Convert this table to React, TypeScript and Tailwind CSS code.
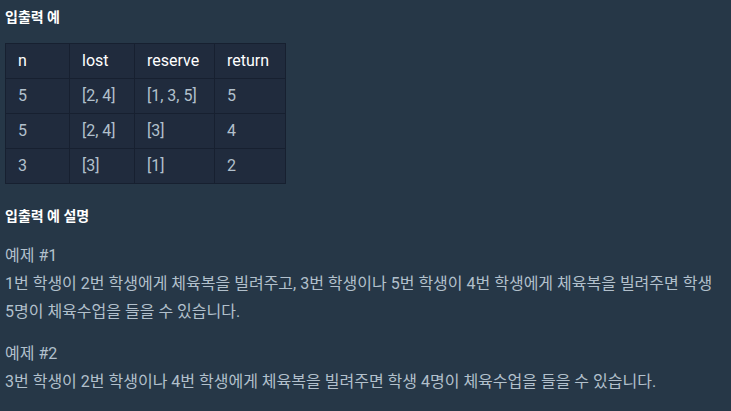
const rows = [
  ["5", "[2, 4]", "[1, 3, 5]", "5"],
  ["5", "[2, 4]", "[3]", "4"],
  ["3", "[3]", "[1]", "2"],
];

const headers = ["n", "lost", "reserve", "return"];
const widths = ["w-[64px]", "w-[65px]", "w-[80px]", "w-[71px]"];

export default function App() {
  return (
    <div
      className="min-h-screen w-full bg-[#263747] text-[#b2c0cc] px-[5px] pt-[5px] break-keep"
      style={{ fontFamily: 'Roboto, "Noto Sans CJK KR", sans-serif' }}
    >
      <h5 className="text-[14px] font-bold text-white leading-[24px]">입출력 예</h5>

      <table className="mt-[14px] border-collapse bg-[#202b3d] text-[16px]">
        <thead>
          <tr>
            {headers.map((h, i) => (
              <th
                key={h}
                className={`${widths[i]} h-[35px] border border-[#172030] px-[12px] text-left font-normal text-white`}
              >
                {h}
              </th>
            ))}
          </tr>
        </thead>
        <tbody>
          {rows.map((r, ri) => (
            <tr key={ri}>
              {r.map((c, ci) => (
                <td
                  key={ci}
                  className="h-[35px] border border-[#172030] px-[12px] text-left"
                >
                  {c}
                </td>
              ))}
            </tr>
          ))}
        </tbody>
      </table>

      <h5 className="mt-[20px] text-[14px] font-bold text-white leading-[24px]">
        입출력 예 설명
      </h5>

      <div className="mt-[14px] text-[16px] leading-[28px]">
        <p>예제 #1</p>
        <p>
          1번 학생이 2번 학생에게 체육복을 빌려주고, 3번 학생이나 5번 학생이 4번 학생에게 체육복을 빌려주면 학생 5명이 체육수업을 들을 수 있습니다.
        </p>
        <p className="mt-[14px]">예제 #2</p>
        <p>3번 학생이 2번 학생이나 4번 학생에게 체육복을 빌려주면 학생 4명이 체육수업을 들을 수 있습니다.</p>
      </div>
    </div>
  );
}
